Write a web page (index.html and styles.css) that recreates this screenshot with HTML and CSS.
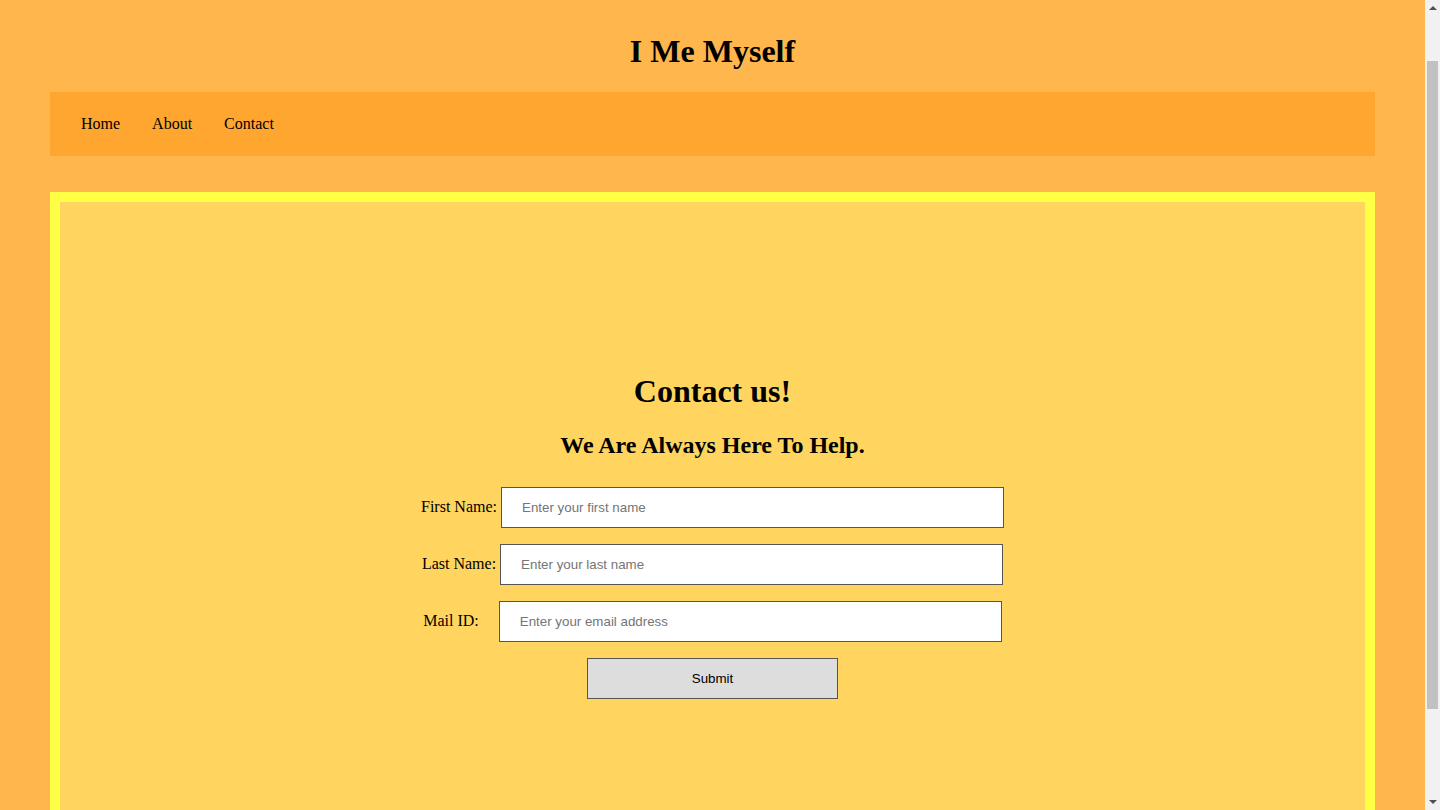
FILE: index.html
```html
<!DOCTYPE html>
<html lang="en">
<head>
<meta charset="utf-8">
<title>I Me Myself</title>
<link rel="stylesheet" href="styles.css">
</head>
<body>
<div class="page">
  <header class="site-header">
    <h1 class="site-title">I Me Myself</h1>
  </header>
  <nav class="nav">
    <a class="nav-link" href="#">Home</a>
    <a class="nav-link" href="#">About</a>
    <a class="nav-link" href="#">Contact</a>
  </nav>
  <main class="main">
    <h1 class="contact-title">Contact us!</h1>
    <h2 class="contact-sub">We Are Always Here To Help.</h2>
    <form class="form">
      <div class="row">
        <label class="label" for="fn">First Name:</label>
        <input class="field" id="fn" type="text" placeholder="Enter your first name">
      </div>
      <div class="row">
        <label class="label" for="ln">Last Name:</label>
        <input class="field" id="ln" type="text" placeholder="Enter your last name">
      </div>
      <div class="row">
        <label class="label label-wide" for="em">Mail ID:</label>
        <input class="field" id="em" type="email" placeholder="Enter your email address">
      </div>
      <div class="row">
        <button class="submit" type="submit">Submit</button>
      </div>
    </form>
  </main>
</div>
<div class="scrollbar" aria-hidden="true">
  <span class="sb-arrow sb-up"></span>
  <span class="sb-thumb"></span>
  <span class="sb-arrow sb-down"></span>
</div>
</body>
</html>
```
FILE: styles.css
```css
html, body {
  margin: 0;
  padding: 0;
}
body {
  background: #ffb74d;
  font-family: "Liberation Serif", "Times New Roman", serif;
  color: #000;
}
.page {
  margin-right: 15px;
  padding-bottom: 50px;
}
.site-header {
  padding: 33px 0 22px;
  text-align: center;
}
.site-title {
  margin: 0;
  font-size: 32px;
  font-weight: bold;
  line-height: 37px;
}
.nav {
  margin: 0 50px;
  height: 64px;
  background: #ffa630;
  display: flex;
  align-items: center;
  padding: 0 15px;
}
.nav-link {
  padding: 0 16px;
  font-size: 16px;
  color: #000;
  text-decoration: none;
}
.main {
  margin: 36px 50px 0;
  border: 10px solid #ffff45;
  background: #ffd55f;
  padding: 150px 0 150px;
  text-align: center;
}
.contact-title {
  margin: 21px 0 0;
  font-size: 32px;
  font-weight: bold;
  line-height: 37px;
}
.contact-sub {
  margin: 22px 0 0;
  font-size: 24px;
  font-weight: bold;
  line-height: 27.6px;
}
.form {
  margin-top: 27px;
  display: flex;
  flex-direction: column;
  align-items: center;
  gap: 16px;
}
.row {
  display: flex;
  align-items: center;
  justify-content: center;
}
.label {
  font-size: 16px;
  margin-right: 4px;
}
.label-wide {
  margin-right: 20px;
}
.field {
  box-sizing: border-box;
  width: 503px;
  height: 41px;
  margin: 0;
  padding: 0 20px;
  border: 1px solid #555;
  background: #fff;
  font-family: "Liberation Sans", Arial, sans-serif;
  font-size: 13.333px;
  color: #000;
  outline: none;
}
.field::placeholder {
  color: #757575;
}
.submit {
  box-sizing: border-box;
  width: 251px;
  height: 41px;
  margin: 0;
  border: 1px solid #555;
  background: #ddd;
  font-family: "Liberation Sans", Arial, sans-serif;
  font-size: 13.333px;
  color: #000;
}
.scrollbar {
  position: fixed;
  top: 0;
  right: 0;
  width: 15px;
  height: 100%;
  background: #f1f1f1;
}
.sb-arrow {
  position: absolute;
  left: 4px;
  width: 0;
  height: 0;
  border-left: 4px solid transparent;
  border-right: 4px solid transparent;
}
.sb-up {
  top: 6px;
  border-bottom: 4px solid #505050;
}
.sb-down {
  bottom: 6px;
  border-top: 4px solid #505050;
}
.sb-thumb {
  position: absolute;
  left: 2px;
  width: 11px;
  top: 61px;
  height: 648px;
  background: #c1c1c1;
}
```
